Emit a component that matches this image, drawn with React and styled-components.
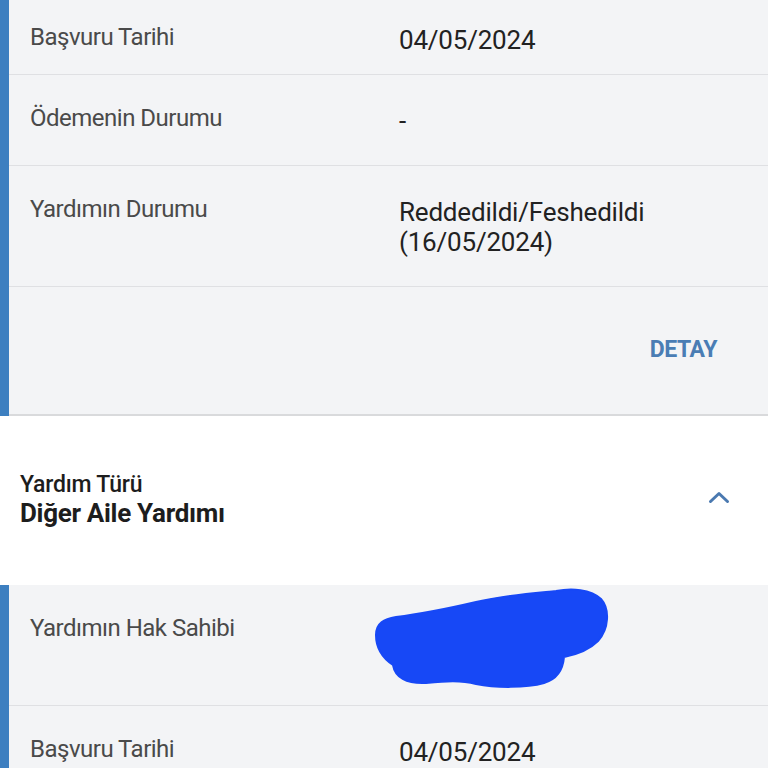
import React from "react";
import styled, { createGlobalStyle } from "styled-components";

const Global = createGlobalStyle`
  html, body { margin: 0; padding: 0; background: #ffffff; }
  body { font-family: Roboto, "Liberation Sans", Arial, sans-serif; -webkit-font-smoothing: antialiased; }
  * { box-sizing: border-box; }
`;

const Page = styled.main`
  width: 768px;
  height: 768px;
  overflow: hidden;
  display: flex;
  flex-direction: column;
  background: #ffffff;
`;

const Section = styled.section`
  background: #f3f4f6;
  border-left: 9px solid #3d7fc0;
  display: flex;
  flex-direction: column;
  flex-shrink: 0;
`;

const Row = styled.div`
  display: grid;
  grid-template-columns: 369px 1fr;
  align-items: start;
  padding: ${(p) => (p.$tight ? "25px 21px 19px" : "31px 21px 29px")};
  border-bottom: 1px solid #dfe0e3;
`;

const Label = styled.div`
  font-size: 24px;
  line-height: 24px;
  letter-spacing: -0.5px;
  color: #4a4a4a;
`;

const Value = styled.div`
  position: relative;
  font-size: 26px;
  line-height: 30px;
  letter-spacing: -0.2px;
  color: #222222;
  min-height: ${(p) => (p.$lines ? p.$lines * 30 : 30)}px;
`;

const Redaction = styled.svg`
  position: absolute;
  left: -23px;
  top: -27px;
  width: 232px;
  height: 100px;
  overflow: visible;
`;

const ActionRow = styled.div`
  height: 129px;
  display: flex;
  align-items: center;
  justify-content: flex-end;
  padding: 0 51px 2px 0;
  border-bottom: 2px solid #d9dadc;
`;

const DetailButton = styled.button`
  border: none;
  background: none;
  padding: 0;
  font-family: inherit;
  font-size: 23px;
  font-weight: 700;
  letter-spacing: -0.4px;
  color: #4a7db4;
  cursor: pointer;
`;

const Header = styled.header`
  height: 169px;
  flex-shrink: 0;
  display: flex;
  align-items: center;
  justify-content: space-between;
  padding: 0 37px 0 20px;
  background: #ffffff;
`;

const HeaderText = styled.div`
  display: flex;
  flex-direction: column;
`;

const HeaderTitle = styled.div`
  font-size: 23px;
  line-height: 26px;
  font-weight: 500;
  letter-spacing: -0.2px;
  color: #1d1d1d;
`;

const HeaderSub = styled.div`
  font-size: 26px;
  line-height: 31px;
  font-weight: 700;
  letter-spacing: -0.3px;
  color: #1d1d1d;
`;

const Chevron = styled.svg`
  width: 24px;
  height: 24px;
  margin-bottom: 8px;
`;

export default function App() {
  return (
    <Page>
      <Global />
      <Section>
        <Row $tight>
          <Label>Başvuru Tarihi</Label>
          <Value>04/05/2024</Value>
        </Row>
        <Row>
          <Label>Ödemenin Durumu</Label>
          <Value>-</Value>
        </Row>
        <Row>
          <Label>Yardımın Durumu</Label>
          <Value $lines={2}>
            Reddedildi/Feshedildi
            <br />
            (16/05/2024)
          </Value>
        </Row>
        <ActionRow>
          <DetailButton>DETAY</DetailButton>
        </ActionRow>
      </Section>

      <Header>
        <HeaderText>
          <HeaderTitle>Yardım Türü</HeaderTitle>
          <HeaderSub>Diğer Aile Yardımı</HeaderSub>
        </HeaderText>
        <Chevron viewBox="0 0 24 24" fill="none">
          <polyline
            points="3.5,16.5 12,8.5 20.5,16.5"
            stroke="#4a79b0"
            strokeWidth="3"
            strokeLinecap="round"
            strokeLinejoin="round"
          />
        </Chevron>
      </Header>

      <Section>
        <Row>
          <Label>Yardımın Hak Sahibi</Label>
          <Value $lines={2}>
            <Redaction viewBox="0 0 232 100">
              <path
                d="M0,46 C0,34 8,30 20,28 C45,25 70,20 100,13 C130,6 160,4 180,2 C195,-1 215,0 225,10 C234,20 233,40 222,52 C212,62 198,66 188,68 C187,80 182,90 168,94 C150,99 120,99 100,95 C85,91 70,92 50,94 C30,95 19,88 17,76 C8,70 0,60 0,46 Z"
                fill="#1748f6"
                stroke="#1748f6"
                strokeWidth="2"
                strokeLinejoin="round"
              />
            </Redaction>
          </Value>
        </Row>
        <Row>
          <Label>Başvuru Tarihi</Label>
          <Value>04/05/2024</Value>
        </Row>
      </Section>
    </Page>
  );
}
